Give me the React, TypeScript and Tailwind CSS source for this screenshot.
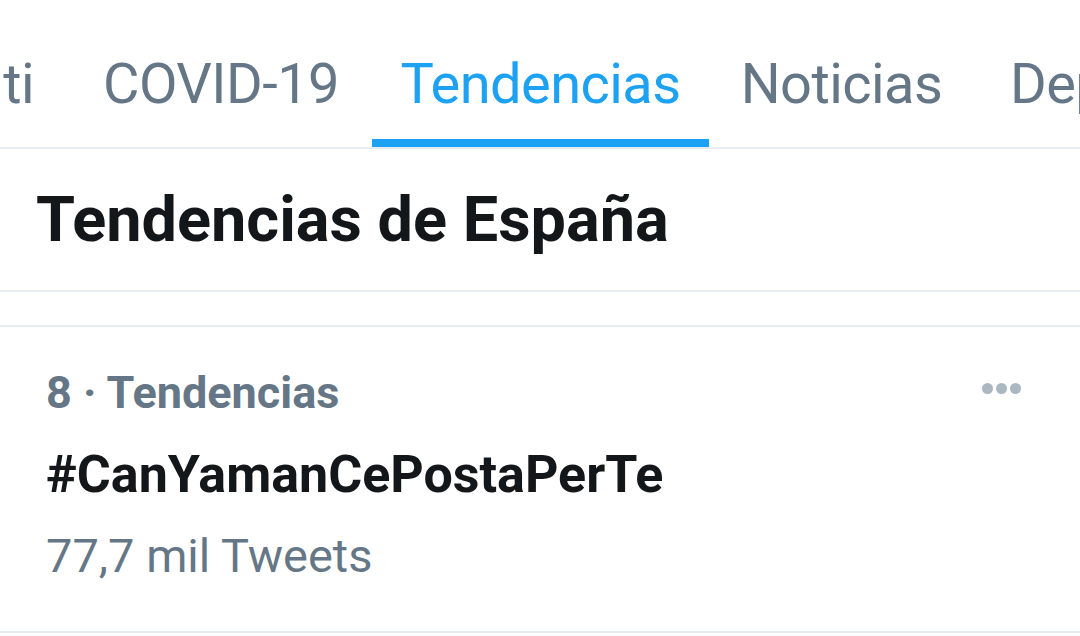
import React from 'react';

const tabs = [
  { label: 'Para ti', width: 'w-[70px]', align: 'justify-end pr-[36px]' },
  { label: 'COVID-19', width: 'w-[302px]', align: 'justify-center' },
  { label: 'Tendencias', width: 'w-[337px]', align: 'justify-center', active: true },
  { label: 'Noticias', width: 'w-[265px]', align: 'justify-center' },
  { label: 'Deportes', width: 'w-[300px]', align: 'justify-start pl-[36px]' },
];

const App: React.FC = () => {
  return (
    <div className="w-[1080px] h-[636px] overflow-hidden bg-white font-['Roboto',sans-serif]">
      {/* Tab bar */}
      <div className="h-[149px] border-b-2 border-[#e6ecf0] flex overflow-hidden">
        {tabs.map((t) => (
          <div
            key={t.label}
            className={`${t.width} shrink-0 h-full flex flex-col overflow-hidden`}
          >
            <div
              className={`pt-[54px] leading-[60px] text-[56px] tracking-[-0.01em] whitespace-nowrap flex ${t.align} ${
                t.active ? 'text-[#1da1f2]' : 'text-[#657786]'
              }`}
            >
              {t.label}
            </div>
            <div className="flex-1" />
            <div className={`h-[8px] ${t.active ? 'bg-[#1da1f2]' : ''}`} />
          </div>
        ))}
      </div>

      {/* Section header */}
      <div className="h-[141px] flex items-center pl-[36px]">
        <h1 className="text-[63px] font-bold text-[#14171a] leading-none">Tendencias de España</h1>
      </div>
      <div className="h-[2px] bg-[#e6ecf0]" />
      <div className="h-[33px]" />
      <div className="h-[2px] bg-[#e6ecf0]" />

      {/* Trend item */}
      <div className="h-[304px] pt-[28px] pl-[46px] pr-[59px]">
        <div className="h-[75px] flex items-center justify-between">
          <span className="text-[45px] font-bold text-[#657786] leading-none">8 · Tendencias</span>
          <div className="flex gap-[3px] -mt-[9px]">
            <span className="w-[11px] h-[11px] rounded-full bg-[#aab8c2]" />
            <span className="w-[11px] h-[11px] rounded-full bg-[#aab8c2]" />
            <span className="w-[11px] h-[11px] rounded-full bg-[#aab8c2]" />
          </div>
        </div>
        <div className="h-[90px] flex items-center">
          <span className="text-[52px] font-bold text-[#14171a] leading-none">#CanYamanCePostaPerTe</span>
        </div>
        <div className="h-[71px] flex items-center">
          <span className="text-[47px] text-[#657786] leading-none">77,7 mil Tweets</span>
        </div>
      </div>
      <div className="h-[2px] bg-[#e6ecf0]" />
    </div>
  );
};

export default App;
